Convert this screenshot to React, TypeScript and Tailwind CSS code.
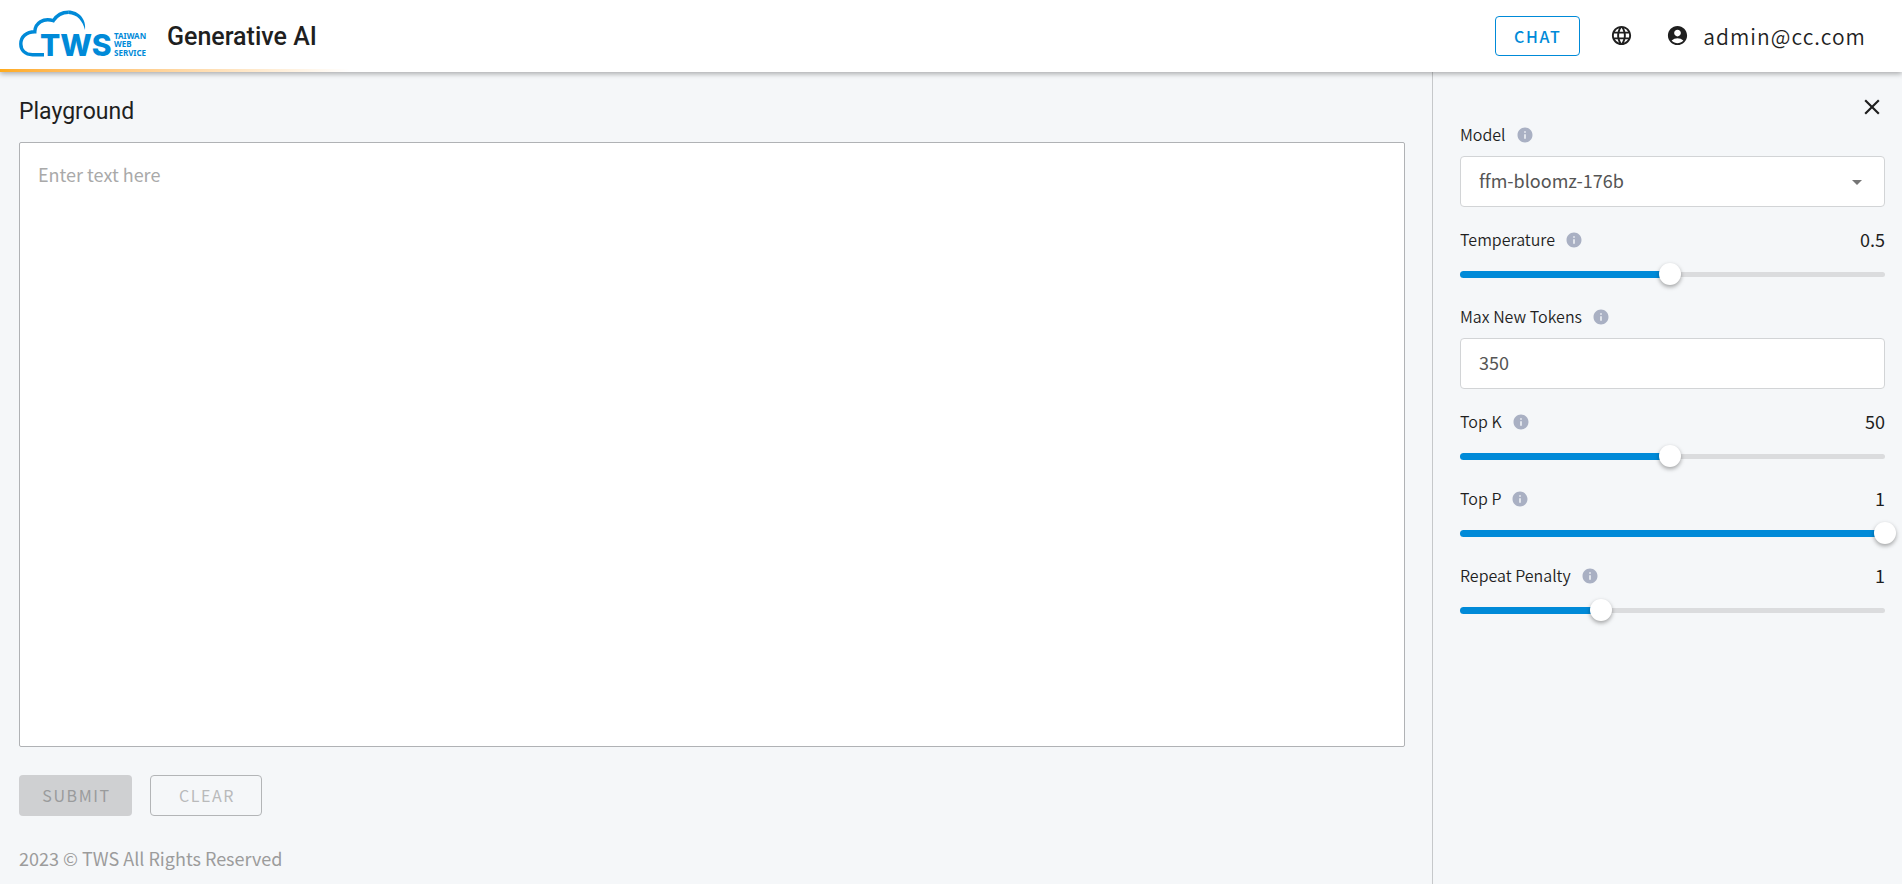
import { useState } from "react";
import type { ReactNode } from "react";
import { MdAccountCircle, MdArrowDropDown, MdClose, MdInfo, MdLanguage } from "react-icons/md";

function Logo() {
  return (
    <svg className="h-14 w-32 shrink-0" viewBox="0 0 128 56" role="img" aria-label="TWS Taiwan Web Service">
      <path
        d="M25 46.700H13.500C6 46.700 1.800 42 1.800 36C1.800 28.500 7.500 24 15.800 23.800C16 15 24.500 9.500 34.300 12.700C38 6.800 43.500 4.200 49.500 4.200"
        fill="none"
        stroke="#008ad8"
        strokeWidth="3.400"
      />
      <path d="M49.300 2.500C60 2.500 67.500 11.500 66 22C63.800 13 58.500 6.200 49.300 5.900Z" fill="#008ad8" />
      <g fill="#008ad8">
        <text x="21" y="48" className="font-['Inter'] text-[30px] font-extrabold">TWS</text>
        <g className="font-['Noto_Sans'] text-[8px] font-bold">
          <text x="95" y="31">TAIWAN</text>
          <text x="95" y="39">WEB</text>
          <text x="95" y="48">SERVICE</text>
        </g>
      </g>
    </svg>
  );
}

function Header() {
  return (
    <header className="relative z-10 flex h-[72px] shrink-0 items-center justify-between bg-white pr-9 pl-[19px] shadow-[0_2px_5px_rgba(0,0,0,0.3)]">
      <a href="#" className="flex items-center gap-5">
        <Logo />
        <span className="pt-0.5 font-['Roboto',sans-serif] text-[25px] font-medium">Generative AI</span>
      </a>
      <div className="flex items-center">
        <button type="button" className="h-10 w-[85px] rounded-[4px] border border-[#008ad8] text-base font-medium tracking-widest text-[#008ad8]">
          CHAT
        </button>
        <button type="button" aria-label="Language" className="ml-[30px] pb-0.5">
          <MdLanguage className="size-[23px]" />
        </button>
        <button type="button" className="ml-[33px] flex items-center gap-[14px] text-[21px] font-[350] tracking-wider">
          <MdAccountCircle className="mb-0.5 size-[23px]" />
          <span className="pt-0.5">admin@cc.com</span>
        </button>
      </div>
      <div className="absolute bottom-0 left-0 h-[3px] w-[350px] bg-linear-to-r from-[#ffab1a] to-white" />
    </header>
  );
}

function FieldLabel({ id, label, value }: { id: string; label: string; value?: ReactNode }) {
  return (
    <div className="flex h-6 items-center justify-between">
      <div className="flex items-center gap-[10px]">
        <label htmlFor={id} className="pb-0.5 text-base font-[350]">{label}</label>
        <MdInfo className="size-[18px] text-[#a9b0c3]" />
      </div>
      {value !== undefined && <output htmlFor={id} className="pb-0.5 text-lg">{value}</output>}
    </div>
  );
}

type SliderProps = { id: string; label: string; min: number; max: number; step: number; initial: number };

function SliderField({ id, label, min, max, step, initial }: SliderProps) {
  const [value, setValue] = useState(initial);
  const percent = ((value - min) / (max - min)) * 100;
  return (
    <div>
      <FieldLabel id={id} label={label} value={value} />
      <div className="mt-3 grid h-5 items-center">
        <div className="col-start-1 row-start-1 h-[5px] rounded-full bg-[#dbdcde]" />
        <div className="col-start-1 row-start-1 h-[7px] rounded-full bg-[#008ad8]" style={{ width: `${percent}%` }} />
        <input
          id={id}
          type="range"
          min={min}
          max={max}
          step={step}
          value={value}
          onChange={(e) => setValue(Number(e.target.value))}
          className="col-start-1 row-start-1 -mx-[11px] h-5 cursor-pointer appearance-none bg-transparent [&::-webkit-slider-thumb]:size-[22px] [&::-webkit-slider-thumb]:appearance-none [&::-webkit-slider-thumb]:rounded-full [&::-webkit-slider-thumb]:bg-white [&::-webkit-slider-thumb]:shadow-[0_2px_4px_rgba(0,0,0,0.35)]"
        />
      </div>
    </div>
  );
}

const fieldBox =
  "h-[51px] w-full appearance-none rounded-[4px] border border-[#d2d4d6] bg-white px-[18px] pb-1 text-lg text-[#555] [font-variant-ligatures:none]";

function Settings() {
  return (
    <aside className="w-[470px] shrink-0 border-l border-[#c6c8ca] pt-[22px] pr-[17px] pl-[27px]">
      <div className="flex h-6 justify-end">
        <button type="button" aria-label="Close" className="h-6">
          <MdClose className="size-[26px]" />
        </button>
      </div>
      <form className="mt-[5px] flex flex-col gap-[21px]">
        <div>
          <FieldLabel id="model" label="Model" />
          <div className="mt-[9px] grid items-center">
            <select id="model" className={`${fieldBox} col-start-1 row-start-1`}>
              <option>ffm-bloomz-176b</option>
            </select>
            <MdArrowDropDown className="pointer-events-none col-start-1 row-start-1 mr-4 size-6 justify-self-end text-[#757575]" />
          </div>
        </div>
        <SliderField id="temperature" label="Temperature" min={0.01} max={1} step={0.01} initial={0.5} />
        <div>
          <FieldLabel id="tokens" label="Max New Tokens" />
          <input id="tokens" type="text" inputMode="numeric" defaultValue="350" className={`${fieldBox} mt-[9px]`} />
        </div>
        <SliderField id="top-k" label="Top K" min={1} max={100} step={1} initial={50} />
        <SliderField id="top-p" label="Top P" min={0.01} max={1} step={0.01} initial={1} />
        <SliderField id="penalty" label="Repeat Penalty" min={0.01} max={3} step={0.01} initial={1} />
      </form>
    </aside>
  );
}

export default function App() {
  return (
    <div className="flex min-h-screen flex-col bg-[#f5f7f9] font-['Noto_Sans_CJK_TC',sans-serif] text-[#1f1f1f]">
      <Header />
      <div className="flex grow">
        <main className="flex grow flex-col pt-6 pr-[27px] pb-[11px] pl-[19px]">
          <h1 className="font-['Roboto',sans-serif] text-[23px] leading-8">Playground</h1>
          <textarea
            aria-label="Prompt"
            placeholder="Enter text here"
            className="mt-[14px] min-h-64 grow resize-none rounded-[2px] border border-[#b0b2b5] bg-white px-[18px] py-[17px] text-lg placeholder:text-[#a9a9a9]"
          />
          <div className="mt-7 flex gap-[18px]">
            <button type="button" disabled className="h-[41px] w-[113px] rounded-[4px] bg-[#cfd0d2] pb-0.5 pl-0.5 text-base tracking-widest text-[#9a9b9c]">
              SUBMIT
            </button>
            <button type="button" disabled className="h-[41px] w-[112px] rounded-[4px] border border-[#b3b5b7] pb-0.5 pl-0.5 text-base tracking-widest text-[#b9babb]">
              CLEAR
            </button>
          </div>
          <footer className="mt-7 text-lg leading-[29px] text-[#9c9c9c]">2023 © TWS All Rights Reserved</footer>
        </main>
        <Settings />
      </div>
    </div>
  );
}
